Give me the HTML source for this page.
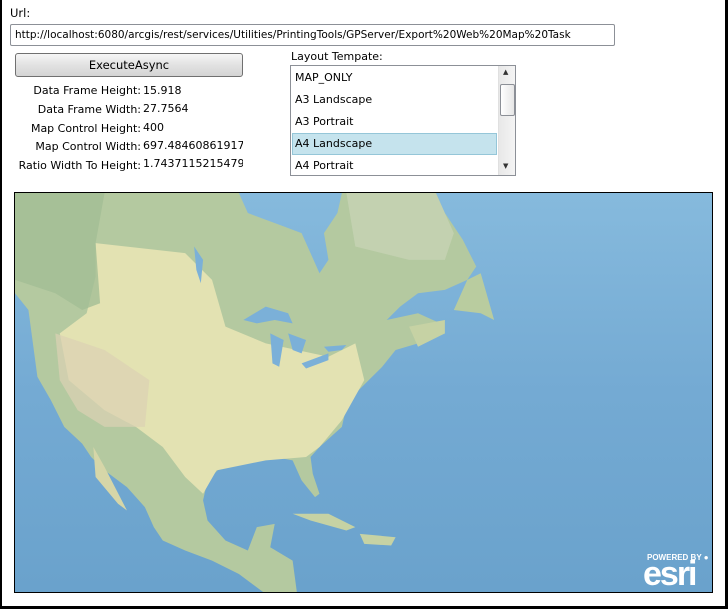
<!DOCTYPE html>
<html><head><meta charset="utf-8"><style>
*{margin:0;padding:0;box-sizing:border-box}
body{width:728px;height:609px;background:#fff;position:relative;overflow:hidden;font-family:"DejaVu Sans","Liberation Sans",sans-serif;font-size:11px;color:#000}
.bl{position:absolute;left:0;top:0;width:2px;height:609px;background:#000}
.br{position:absolute;right:0;top:0;width:3px;height:609px;background:#000}
.bb{position:absolute;left:0;bottom:0;width:728px;height:3px;background:#000}
.a{position:absolute;white-space:nowrap}
.tb{position:absolute;left:10px;top:24px;width:605px;height:22px;border:1px solid #8c9097;border-radius:2px;padding:4px 0 0 4px;font-size:10.5px}
.btn{position:absolute;left:15px;top:53px;width:228px;height:24px;border:1px solid #707070;border-radius:3px;background:linear-gradient(#f6f6f6,#e2e2e2 50%,#d4d4d4);text-align:center;line-height:22px;font-size:11.5px}
.lbl{position:absolute;right:587px;white-space:nowrap;font-size:11px}
.val{position:absolute;left:143px;width:100px;overflow:hidden;white-space:nowrap;font-size:11px}
.lb{position:absolute;left:290px;top:65px;width:226px;height:111px;border:1px solid #8c9097;overflow:hidden}
.it{position:absolute;left:1px;width:205px;height:22px;padding:4px 0 0 3px;font-size:11px}
.sel{background:#c5e3ed;border:1px solid #95c6d8;padding:3px 0 0 2px}
.sb{position:absolute;left:207px;top:0;width:17px;height:109px;background:linear-gradient(90deg,#e8e8e8,#f4f4f4);border-left:1px solid #e0e0e0}
.th{position:absolute;left:209px;top:18px;width:15px;height:32px;border:1px solid #8c9097;border-radius:2px;background:linear-gradient(90deg,#fff,#e6e6e6)}
.map{position:absolute;left:14px;top:192px;width:699px;height:401px;border:1px solid #000;overflow:hidden;background:linear-gradient(#86badd,#74aad3 50%,#6aa2cc)}
</style></head><body>
<div class="bl"></div><div class="br"></div><div class="bb"></div>
<div class="a" style="left:10px;top:6px;font-size:11.5px">Url:</div>
<div class="tb">http://localhost:6080/arcgis/rest/services/Utilities/PrintingTools/GPServer/Export%20Web%20Map%20Task</div>
<div class="btn">ExecuteAsync</div>
<div class="lbl" style="top:84px">Data Frame Height:</div><div class="val" style="top:84px">15.918</div>
<div class="lbl" style="top:103px">Data Frame Width:</div><div class="val" style="top:102px">27.7564</div>
<div class="lbl" style="top:122px">Map Control Height:</div><div class="val" style="top:121px">400</div>
<div class="lbl" style="top:140px">Map Control Width:</div><div class="val" style="top:139px">697.48460861917</div>
<div class="lbl" style="top:159px">Ratio Width To Height:</div><div class="val" style="top:157px">1.7437115215479</div>
<div class="a" style="left:291px;top:50px">Layout Tempate:</div>
<div class="lb">
<div class="it" style="top:1px">MAP_ONLY</div>
<div class="it" style="top:23px">A3 Landscape</div>
<div class="it" style="top:45px">A3 Portrait</div>
<div class="it sel" style="top:67px">A4 Landscape</div>
<div class="it" style="top:89px">A4 Portrait</div>
<div class="sb"></div><div class="th"></div>
<div class="a" style="left:212px;top:2px;font-size:7px;color:#333">▲</div>
<div class="a" style="left:212px;top:96px;font-size:7px;color:#333">▼</div>
</div>
<div class="map">
<svg width="699" height="401" viewBox="0 0 1561 1200" preserveAspectRatio="none">
<path fill="#b4c9a0" d="M0 0L500 0L520 60L600 100L640 120L660 180L680 240L700 200L690 120L720 60L730 0L940 0L960 60L1000 140L1030 220L1010 260L960 290L900 300L860 340L830 380L900 360L950 390L960 420L900 450L850 470L820 520L790 560L760 600L740 640L730 700L680 760L660 790L665 840L680 900L670 910L640 860L620 800L580 790L520 800L460 820L430 860L420 920L430 980L470 1040L520 1070L540 1000L580 990L570 1060L620 1100L630 1200L560 1200L500 1140L440 1100L380 1070L330 1040L310 1000L290 940L250 880L200 830L170 790L150 750L110 700L80 620L50 550L40 450L30 350L0 300Z"/>
<path fill="#e3e2b2" d="M180 150L380 180L440 260L470 400L560 450L700 490L760 450L780 560L730 680L680 760L650 790L560 800L450 830L420 900L380 850L330 760L270 700L200 650L120 560L100 420L160 360L180 250Z"/>
<path fill="#dcd2b4" d="M90 420L200 470L300 560L290 700L200 700L140 650L100 560Z" opacity=".7"/>
<path fill="#a3be95" d="M0 0L200 0L180 150L190 330L150 350L90 300L0 260Z" opacity=".8"/>
<path fill="#c9d4b6" d="M740 0L940 0L980 120L960 200L880 200L760 160Z" opacity=".7"/>
<path fill="#d6d6a8" d="M175 760L200 820L250 950L230 930L180 850Z"/>
<path fill="#b9cc9f" d="M980 350L1010 260L1040 240L1070 380L1040 360Z"/>
<path fill="#c6d2a4" d="M620 960L700 960L760 1000L740 1010L660 980Z"/>
<path fill="#c6d2a4" d="M770 1020L850 1030L840 1055L780 1050Z"/>
<path fill="#c6d2a4" d="M880 400L960 380L960 420L900 460Z"/>
<path fill="#7bb0d8" d="M510 380L560 340L610 360L620 390L580 380L540 390Z"/>
<path fill="#7bb0d8" d="M570 420L600 440L590 520L575 510Z"/>
<path fill="#7bb0d8" d="M610 420L650 440L640 480L620 470Z"/>
<path fill="#7bb0d8" d="M640 510L700 480L700 500L650 525Z"/>
<path fill="#7bb0d8" d="M690 460L740 455L730 470L700 475Z"/>
<path fill="#7bb0d8" d="M400 160L420 200L415 270L405 230Z"/>
</svg>
<div class="a" style="left:632px;top:360px;font:bold 8px 'Liberation Sans',sans-serif;color:#fff">POWERED BY ●</div>
<div class="a" style="left:628px;top:362px;font:bold 34px 'Liberation Sans',sans-serif;color:#fff;letter-spacing:-2px">esri</div>
</div>
</body></html>
